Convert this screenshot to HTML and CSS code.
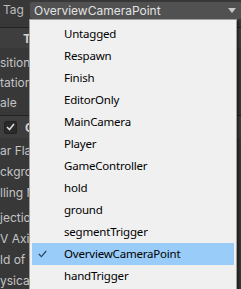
FILE: index.html
```html
<!DOCTYPE html>
<html lang="en">
<head>
  <meta charset="UTF-8" />
  <title>Tag Popup</title>
  <link rel="stylesheet" href="styles.css">
</head>
<body>
  <div class="inspector">
    <div class="tag-row">
      <span class="tag-label">Tag</span>
      <div class="popup-field">
        <span>OverviewCameraPoint</span>
        <svg class="arrow" width="8" height="5" viewBox="0 0 8 5"><polygon points="0,0 8,0 4,5" fill="#c8c8c8"/></svg>
      </div>
    </div>

    <div class="comp-header">
      <span class="comp-title">Transform</span>
    </div>
    <div class="props">
      <div class="prop">sition</div>
      <div class="prop">tation</div>
      <div class="prop">ale</div>
    </div>

    <div class="comp-header cam-header">
      <span class="checkbox">
        <svg width="9" height="8" viewBox="0 0 9 8"><polyline points="1,4 3.5,6.5 8,1" fill="none" stroke="#dcdcdc" stroke-width="1.6"/></svg>
      </span>
      <span class="comp-title">Camera</span>
    </div>
    <div class="props">
      <div class="prop">ar Flags</div>
      <div class="prop">ckground</div>
      <div class="prop">lling Mask</div>
    </div>
    <div class="props second">
      <div class="prop">jection</div>
      <div class="prop">V Axis</div>
      <div class="prop">ld of View</div>
      <div class="prop">ysical Camera</div>
    </div>
  </div>

  <!-- dropdown opened from the Tag field -->
  <div class="menu">
    <div class="item">Untagged</div>
    <div class="item">Respawn</div>
    <div class="item">Finish</div>
    <div class="item">EditorOnly</div>
    <div class="item">MainCamera</div>
    <div class="item">Player</div>
    <div class="item">GameController</div>
    <div class="item">hold</div>
    <div class="item">ground</div>
    <div class="item">segmentTrigger</div>
    <div class="item selected">
      <svg class="check" width="9" height="8" viewBox="0 0 9 8"><polyline points="0.8,4 3.4,6.6 8.2,1" fill="none" stroke="#2d4a66" stroke-width="1.3"/></svg>
      OverviewCameraPoint
    </div>
    <div class="item">handTrigger</div>
  </div>
</body>
</html>
```

FILE: styles.css
```css
body {
  margin: 0;
  width: 241px;
  height: 289px;
  overflow: hidden;
  background-color: #383838;
  font-family: Inter, "Noto Sans", sans-serif;
  font-size: 12px;
  color: #c4c4c4;
  position: relative;
}
.tag-row {
  display: flex;
  align-items: center;
  height: 19px;
}
.tag-label {
  width: 30px;
  padding-left: 3px;
  box-sizing: border-box;
  color: #bcbcbc;
}
.popup-field {
  flex: 1;
  display: flex;
  align-items: center;
  justify-content: space-between;
  height: 17px;
  margin-top: 1px;
  padding: 0 5px 0 4px;
  background-color: #515151;
  color: #e2e2e2;
  border-radius: 2px 0 0 2px;
}
.comp-header {
  display: flex;
  align-items: center;
  margin-top: 8px;
  height: 20px;
  border-top: 1px solid #242424;
  background-color: #3e3e3e;
  padding-left: 23px;
  font-weight: bold;
  color: #d2d2d2;
}
/* the open menu hides everything right of x=29 */
.comp-title {
  width: 6px;
  overflow: hidden;
  white-space: nowrap;
}
.props {
  padding-top: 5px;
}
.prop {
  width: 29px;
  height: 20px;
  line-height: 20px;
  white-space: nowrap;
  overflow: hidden;
}
.cam-header {
  margin-top: 2px;
  height: 22px;
  padding-left: 4px;
}
.checkbox {
  width: 11px;
  height: 11px;
  margin-right: 8px;
  background-color: #2a2a2a;
  border: 1px solid #222;
  border-radius: 2px;
  display: flex;
  align-items: center;
  justify-content: center;
}
.cam-header + .props {
  padding-top: 2px;
}
.cam-header + .props .prop {
  height: 21px;
  line-height: 21px;
}
.props.second {
  padding-top: 4px;
}
.props.second .prop {
  height: 21px;
  line-height: 21px;
}

.menu {
  position: absolute;
  left: 29px;
  top: 19px;
  width: 202px;
  padding: 3px 2px;
  background-color: #f0f0f0;
  border: 1px solid #a0a0a0;
  box-shadow: 2px 2px 2px rgba(0,0,0,0.45);
  font-family: "Noto Sans", sans-serif;
  font-size: 11.5px;
  letter-spacing: -0.2px;
  color: #000;
}
.item {
  position: relative;
  height: 22px;
  line-height: 22px;
  padding-left: 32px;
}
.item.selected {
  background-color: #99ccf8;
}
.check {
  position: absolute;
  left: 6px;
  top: 7px;
}
```
